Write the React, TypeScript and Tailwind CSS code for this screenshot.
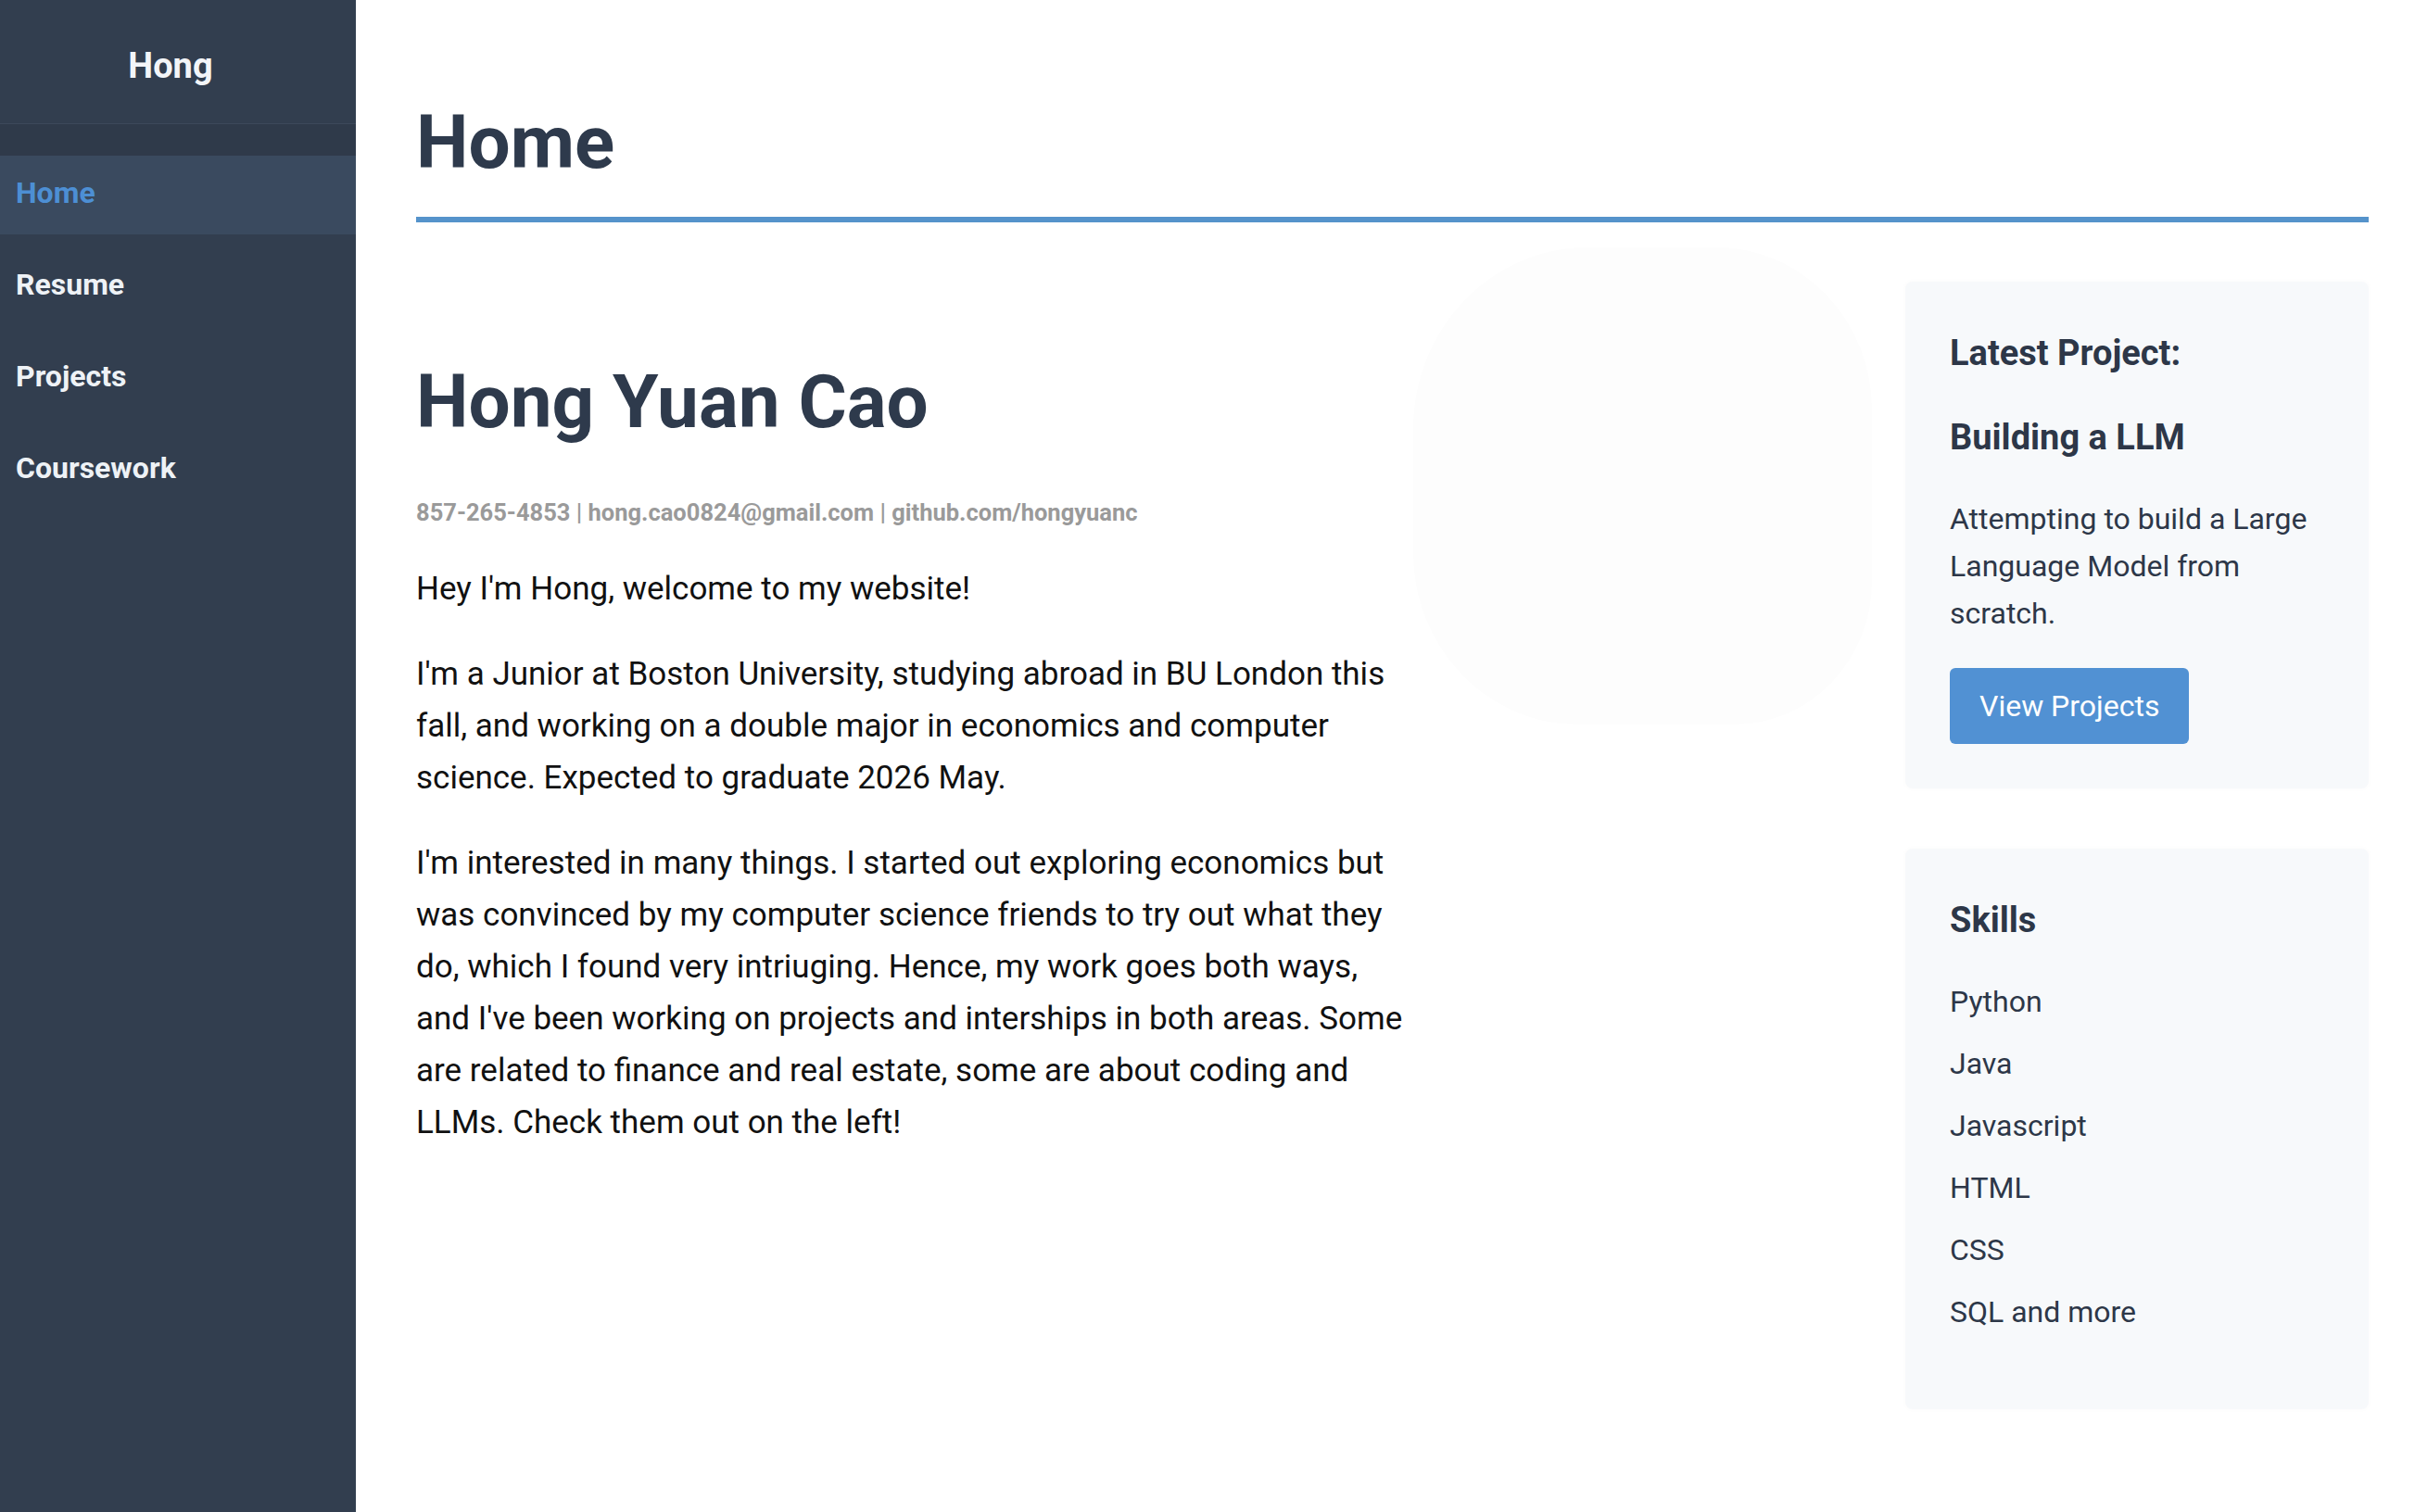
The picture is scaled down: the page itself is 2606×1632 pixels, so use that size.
import React from "react";

// ─── Data ────────────────────────────────────────────────────────────────────

const NAV = ["Home", "Resume", "Projects", "Coursework"];
const SKILLS = ["Python", "Java", "Javascript", "HTML", "CSS", "SQL and more"];

const FONT = "font-['Roboto','Liberation_Sans',sans-serif]";

// ─── Sidebar ─────────────────────────────────────────────────────────────────

function Sidebar() {
  return (
    <aside className="w-[384px] shrink-0 bg-[#323e4f] min-h-screen">
      <div className="pt-[48px] pb-[39px] pr-[16px] border-b border-[#3c485a] text-center">
        <span className="text-[38px] leading-[46px] font-bold text-[#f3f5f8]">Hong</span>
      </div>
      <div className="h-[34px] bg-[#2f3a4a]" />
      <nav className="flex flex-col gap-[14px]">
        {NAV.map((item) => (
          <a
            key={item}
            href="#"
            className={
              item === "Home"
                ? "h-[85px] flex items-center px-[17px] pb-[6px] text-[32px] font-bold text-[#4d8fd4] bg-[#3a4a5f]"
                : "h-[85px] flex items-center px-[17px] pb-[6px] text-[32px] font-bold text-[#eef2f6]"
            }
          >
            {item}
          </a>
        ))}
      </nav>
    </aside>
  );
}

// ─── Side cards ──────────────────────────────────────────────────────────────

function LatestProjectCard() {
  return (
    <div className="bg-[#f7f9fb] rounded-lg shadow-[0_0_6px_rgba(0,0,0,0.025)] px-[48px] pt-[54px] pb-[48px] text-[#2d3748]">
      <h3 className="text-[38px] leading-[46px] font-bold">Latest Project:</h3>
      <h3 className="mt-[45px] text-[38px] leading-[46px] font-bold">Building a LLM</h3>
      <p className="mt-[40px] text-[32px] leading-[51px]">
        Attempting to build a Large Language Model from scratch.
      </p>
      <button className="mt-[33px] h-[82px] px-[32px] rounded-md bg-[#5191d3] text-white text-[32px]">
        View Projects
      </button>
    </div>
  );
}

function SkillsCard() {
  return (
    <div className="bg-[#f7f9fb] rounded-lg shadow-[0_0_6px_rgba(0,0,0,0.025)] px-[48px] pt-[54px] pb-[71px] text-[#2d3748]">
      <h3 className="text-[38px] leading-[46px] font-bold">Skills</h3>
      <ul className="mt-[32px]">
        {SKILLS.map((s) => (
          <li key={s} className="text-[32px] leading-[67px]">
            {s}
          </li>
        ))}
      </ul>
    </div>
  );
}

// ─── Page ────────────────────────────────────────────────────────────────────

export default function App() {
  return (
    <div className={`flex min-h-screen bg-white ${FONT}`}>
      <Sidebar />

      <main className="flex-1 pl-[65px] pr-[50px] pt-[106px]">
        {/* Title */}
        <h1 className="text-[80px] leading-[96px] font-bold text-[#2e3a4c] pb-[32px] border-b-[6px] border-[#5593cb]">
          Home
        </h1>

        <div className="flex items-start">
          {/* Intro column */}
          <section className="w-[1076px] shrink-0 pt-[146px]">
            <h2 className="text-[80px] leading-[96px] font-bold text-[#2e3a4c]">Hong Yuan Cao</h2>
            <p className="mt-[53px] text-[25.5px] leading-[36px] font-bold text-[#9a9a9a]">
              857-265-4853 | hong.cao0824@gmail.com | github.com/hongyuanc
            </p>
            <div className="mt-[37px] flex flex-col gap-[36px] text-[35px] leading-[56px] text-[#111111]">
              <p>Hey I'm Hong, welcome to my website!</p>
              <p>
                I'm a Junior at Boston University, studying abroad in BU London this fall, and working on a
                double major in economics and computer science. Expected to graduate 2026 May.
              </p>
              <p>
                I'm interested in many things. I started out exploring economics but was convinced by my
                computer science friends to try out what they do, which I found very intriuging. Hence, my
                work goes both ways, and I've been working on projects and interships in both areas. Some are
                related to finance and real estate, some are about coding and LLMs. Check them out on the left!
              </p>
            </div>
          </section>

          {/* Faded portrait */}
          <div className="flex-1 pt-[27px]">
            <div className="w-[495px] h-[515px] rounded-[38%_34%_30%_36%] bg-[#fdfdfd]" />
          </div>

          {/* Side cards */}
          <aside className="w-[500px] shrink-0 pt-[64px] flex flex-col gap-[65px]">
            <LatestProjectCard />
            <SkillsCard />
          </aside>
        </div>
      </main>
    </div>
  );
}
